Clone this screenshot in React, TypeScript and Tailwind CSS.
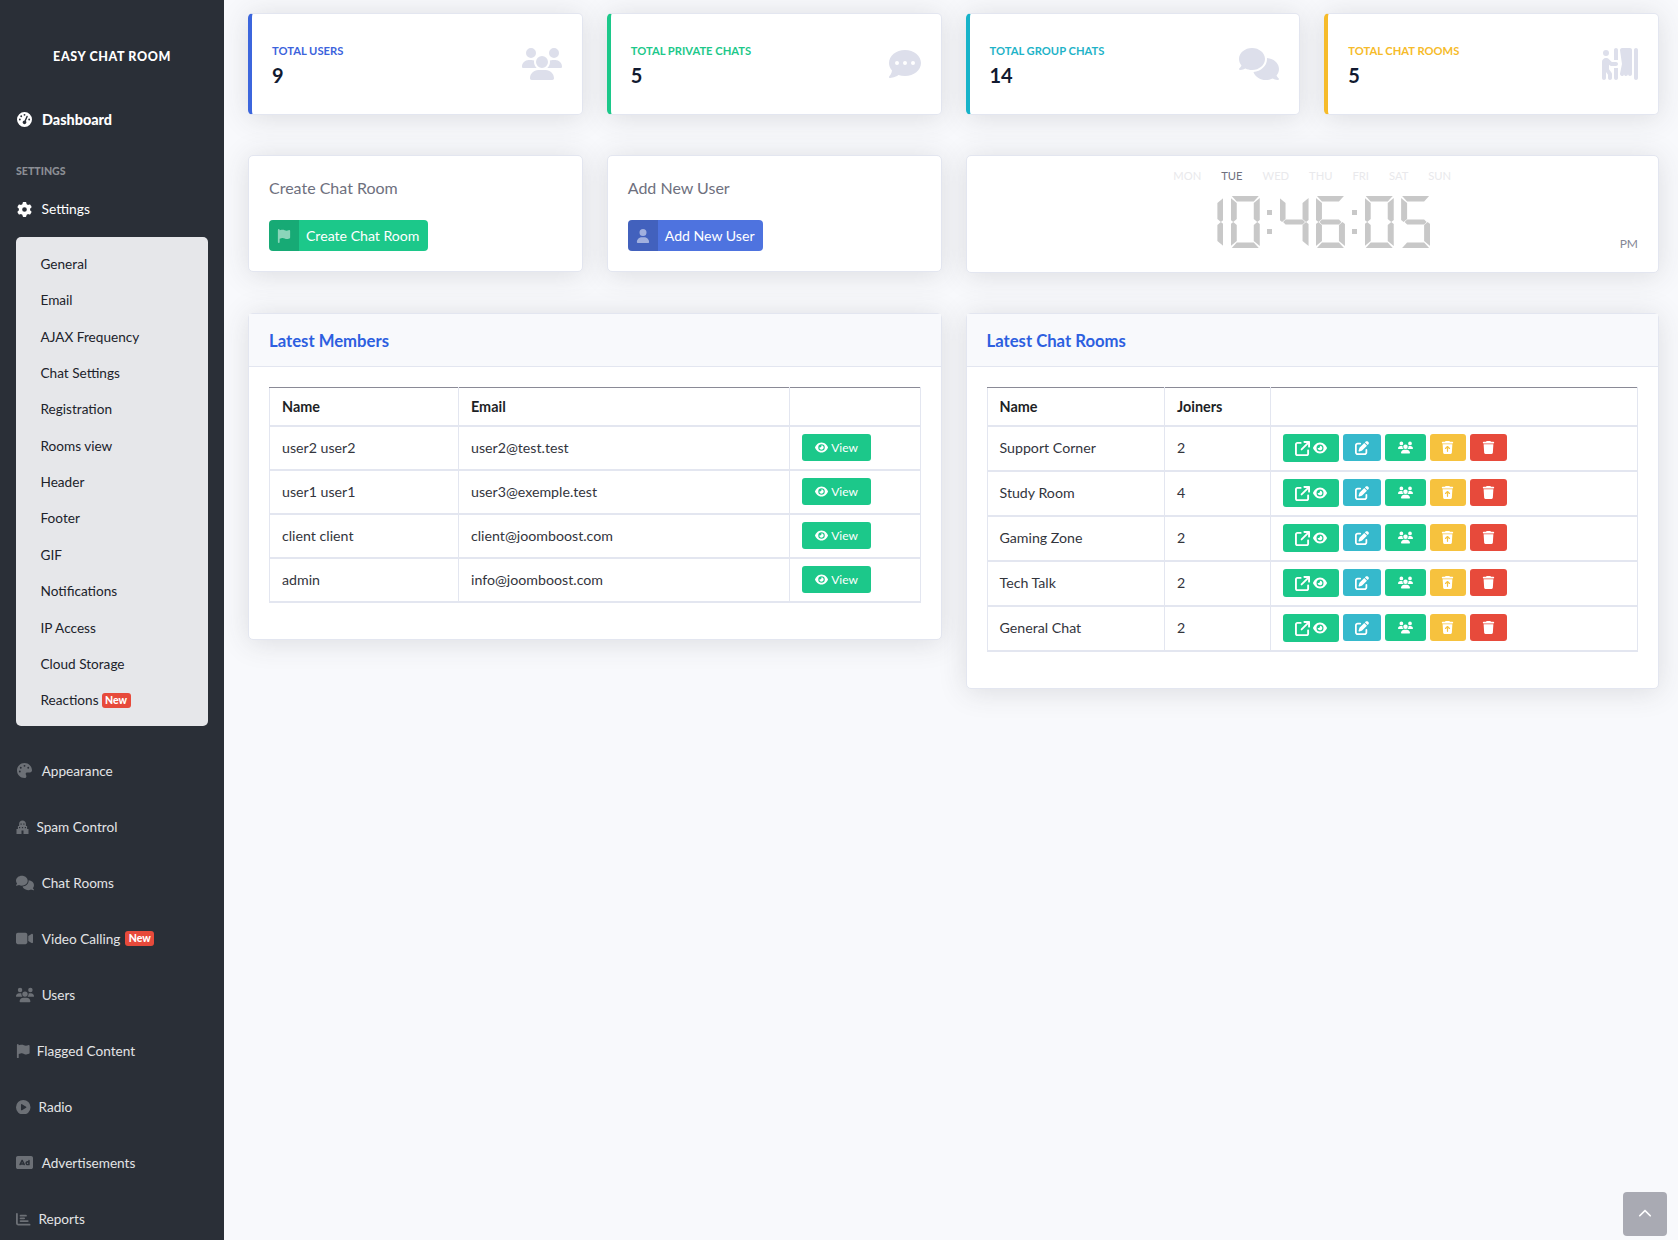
import React from "react";
import {
  FaGaugeHigh, FaGear, FaPalette, FaComments, FaVideo, FaUsers, FaFlag, FaCirclePlay, FaRectangleAd,
  FaChartBar, FaCommentDots, FaPersonBooth, FaUser, FaEye, FaArrowUpRightFromSquare, FaPenToSquare, FaTrash, FaTrashArrowUp, FaChevronUp,
} from "react-icons/fa6";

const SEG: Record<string, string> = {
  a: "[clip-path:polygon(1px_0,28px_0,23px_5.5px,6px_5.5px)]",
  b: "[clip-path:polygon(29px_2px,29px_24px,26.5px_26px,23px_23px,23px_7px)]",
  c: "[clip-path:polygon(29px_28px,29px_50px,23px_45px,23px_29px,26.5px_26px)]",
  d: "[clip-path:polygon(6px_46.5px,23px_46.5px,28px_52px,1px_52px)]",
  e: "[clip-path:polygon(0_28px,2.5px_26px,6px_29px,6px_45px,0_50px)]",
  f: "[clip-path:polygon(0_2px,6px_7px,6px_23px,2.5px_26px,0_24px)]",
  g: "[clip-path:polygon(6px_23.5px,23px_23.5px,25.5px_26px,23px_28.5px,6px_28.5px,3.5px_26px)]",
};
const DIGITS: Record<string, string> = { "0": "abcdef", "1": "bc", "4": "bcfg", "5": "acdfg", "6": "acdefg" };

function Digit({ v }: { v: string }) {
  return (
    <div className="grid h-[52px] w-[29px]">
      {DIGITS[v].split("").map((s) => (
        <div key={s} className={"col-start-1 row-start-1 h-[52px] w-[29px] bg-[#c8c8c8] " + SEG[s]} />
      ))}
    </div>
  );
}
function Colon() {
  return (
    <div className="flex h-[52px] w-[5px] flex-col items-center gap-[14px] pt-[14px]">
      <div className="h-[5px] w-[5px] bg-[#c8c8c8]" />
      <div className="h-[5px] w-[5px] bg-[#c8c8c8]" />
    </div>
  );
}

function SpamIcon() {
  return (
    <svg viewBox="1 0 12 14" className="h-[14px] w-[13px]" fill="currentColor" aria-hidden="true">
      <path d="M7 0.5c2 0 3.4 1.4 3.4 3.2V6h1.2v3H13v5H1V9h1.4V6h1.2V3.7C3.600 1.900 5 .5 7 .5z" />
      <g fill="#2a2f37">
        <rect x="5" y="3.500" width="1.200" height="1.200" /><rect x="7.800" y="3.500" width="1.200" height="1.200" />
        <rect x="3.500" y="7" width="1.200" height="1.200" /><rect x="6.400" y="7" width="1.200" height="1.200" /><rect x="9.300" y="7" width="1.200" height="1.200" />
        <rect x="6" y="10.500" width="2" height="3.500" />
      </g>
    </svg>
  );
}

const cardShadow = "shadow-[0_2.4px_28px_0_rgba(58,59,69,0.15)]";
function New({ wide }: { wide?: boolean }) {
  return <span className={(wide ? "ml-[5px] " : "ml-[3px] ") + "inline-flex h-[15px] w-[29px] items-center justify-center rounded-[3px] bg-[#e74a3b] text-[10.5px] font-black text-white"}>New</span>;
}

const sub = ["General", "Email", "AJAX Frequency", "Chat Settings", "Registration", "Rooms view", "Header", "Footer", "GIF", "Notifications", "IP Access", "Cloud Storage"];
const nav: { icon: React.ReactNode; label: string; w: string; badge?: boolean }[] = [
  { icon: <FaPalette className="ml-px text-[15px]" />, label: "Appearance", w: "w-[25.7px]" },
  { icon: <SpamIcon />, label: "Spam Control", w: "w-[20.5px]" },
  { icon: <FaComments className="text-[18px]" />, label: "Chat Rooms", w: "w-[25.7px]" },
  { icon: <FaVideo className="text-[17px]" />, label: "Video Calling", w: "w-[25.7px]", badge: true },
  { icon: <FaUsers className="text-[18px]" />, label: "Users", w: "w-[25.7px]" },
  { icon: <FaFlag className="text-[14.5px]" />, label: "Flagged Content", w: "w-[20.7px]" },
  { icon: <FaCirclePlay className="text-[14.5px]" />, label: "Radio", w: "w-[22.5px]" },
  { icon: <FaRectangleAd className="text-[17px]" />, label: "Advertisements", w: "w-[25.7px]" },
  { icon: <FaChartBar className="text-[14.5px]" />, label: "Reports", w: "w-[22.5px]" },
];
const stats = [
  { label: "Total Users", v: "9", border: "border-l-[#3c66dd]", text: "text-[#3c63dc]", icon: <FaUsers className="text-[40px]" /> },
  { label: "Total Private Chats", v: "5", border: "border-l-[#1cc88a]", text: "text-[#1cc88a]", icon: <FaCommentDots className="text-[32px]" /> },
  { label: "Total Group Chats", v: "14", border: "border-l-[#17b3c9]", text: "text-[#1fb3c8]", icon: <FaComments className="text-[40px]" /> },
  { label: "Total Chat Rooms", v: "5", border: "border-l-[#f6bb2a]", text: "text-[#f6bb2a]", icon: <FaPersonBooth className="text-[36px]" /> },
];
const members = [
  ["user2 user2", "user2@test.test"],
  ["user1 user1", "user3@exemple.test"],
  ["client client", "client@joomboost.com"],
  ["admin", "info@joomboost.com"],
];
const rooms = [["Support Corner", "2"], ["Study Room", "4"], ["Gaming Zone", "2"], ["Tech Talk", "2"], ["General Chat", "2"]];
const th = "h-[38px] border-x border-t-[1.5px] border-x-[#e3e6f0] border-t-[#8a8a96] px-3 pt-[1px] text-left align-middle text-[14.4px] font-bold text-[#1d1f26]";
const td = "border-x border-t-2 border-x-[#e3e6f0] border-t-[#e3e6f0] px-3 align-middle text-[14.2px] text-[#33353d]";
const ab = "flex h-[27px] items-center justify-center rounded-[3px] text-white";

function Panel({ title, children }: { title: string; children: React.ReactNode }) {
  return (
    <section className={"rounded-[5px] border border-[#e3e6f0] bg-white " + cardShadow}>
      <header className="flex h-[53px] items-center border-b border-[#e3e6f0] bg-[#f8f9fc] px-5 pt-[3px] text-[16.7px] font-bold text-[#2d5fe0]">{title}</header>
      <div className="p-5 pb-[36px]">{children}</div>
    </section>
  );
}

export default function App() {
  return (
    <div className="flex h-[1240px] overflow-hidden bg-[#f8f9fc] font-['Lato',sans-serif]">
      <aside className="flex w-[224px] shrink-0 flex-col bg-[#2a2f37] px-4 text-[13.6px] text-[#e3e4e6]">
        <div className="mt-1 h-px bg-[#3b4048]" />
        <div className="mt-[44px] flex h-[20px] items-center justify-center text-[12.5px] font-black tracking-[0.6px] text-white">EASY CHAT ROOM</div>
        <div className="mt-[43px] flex h-[20px] items-center text-[14.4px] font-black text-white">
          <span className="flex w-[26px] items-center"><FaGaugeHigh className="ml-px text-[15px]" /></span>Dashboard
        </div>
        <div className="mt-[17px] h-px bg-[#3b4048]" />
        <div className="mt-[18px] flex h-[14px] items-center text-[10.6px] font-black uppercase text-[#8b8e94]">Settings</div>
        <div className="mt-[21px] flex h-[20px] items-center text-[13.8px] text-white">
          <span className="flex w-[25.5px] items-center"><FaGear className="ml-px text-[15px]" /></span>Settings
        </div>
        <ul className="mt-[17px] rounded-[5px] bg-[#e6e7ea] pb-[7px] pl-[24.5px] pt-[9px] text-[#20232b]">
          {sub.map((s) => <li key={s} className="flex h-[36.4px] items-center">{s}</li>)}
          <li className="flex h-[36.4px] items-center">Reactions<New /></li>
        </ul>
        <nav className="mt-[17px]">
          {nav.map((n) => (
            <a key={n.label} className="flex h-[56px] items-center">
              <span className={"flex shrink-0 items-center text-[#6c7076] " + n.w}>{n.icon}</span>
              {n.label}{n.badge && <New wide />}
            </a>
          ))}
        </nav>
      </aside>

      <main className="flex min-w-0 flex-1 flex-col pl-6 pr-[19px] pt-[13px]">
        <div className="grid grid-cols-4 gap-6">
          {stats.map((s) => (
            <div key={s.label} className={"flex h-[101.5px] items-center justify-between rounded-[5px] border border-l-4 border-[#e3e6f0] bg-white pl-5 pr-5 " + s.border + " " + cardShadow}>
              <div className="pt-[2px]">
                <div className={"text-[11.2px] font-bold uppercase leading-[16px] " + s.text}>{s.label}</div>
                <div className="mt-[4px] text-[20px] font-bold leading-[24px] text-[#111a30]">{s.v}</div>
              </div>
              <div className="text-[#dddfeb]">{s.icon}</div>
            </div>
          ))}
        </div>

        <div className="mt-[40.5px] grid grid-cols-4 items-start gap-6">
          {[
            { t: "Create Chat Room", bg: "bg-[#1cc88a]", pr: "pr-[9px]", icon: <FaFlag className="text-[14px]" /> },
            { t: "Add New User", bg: "bg-[#4e73df]", pr: "pr-[8px]", icon: <FaUser className="text-[14px]" /> },
          ].map((c) => (
            <div key={c.t} className={"h-[117px] rounded-[5px] border border-[#e3e6f0] bg-white px-5 pt-[20px] " + cardShadow}>
              <div className="text-[16px] leading-[24px] text-[#6e707e]">{c.t}</div>
              <button className={"mt-[20px] flex h-[31px] items-stretch overflow-hidden rounded-[4px] text-[14.1px] text-white " + c.bg}>
                <span className="flex w-[30px] items-center justify-center bg-black/15 text-white/50">{c.icon}</span>
                <span className={"flex items-center pl-[7px] " + c.pr}>{c.t}</span>
              </button>
            </div>
          ))}
          <div className={"col-span-2 h-[118px] rounded-[5px] border border-[#e3e6f0] bg-white px-5 pt-[11px] " + cardShadow}>
            <div className="flex justify-center gap-5 text-[11.2px] leading-[18px] text-[#e9e9ec]">
              <span>MON</span><span className="text-[#6e707e]">TUE</span><span>WED</span><span>THU</span><span>FRI</span><span>SAT</span><span>SUN</span>
            </div>
            <div className="mt-[11px] grid grid-cols-[1fr_auto_1fr]">
              <div />
              <div className="flex gap-[7.4px]" role="img" aria-label="10:46:05">
                <Digit v="1" /><Digit v="0" /><Colon /><Digit v="4" /><Digit v="6" /><Colon /><Digit v="0" /><Digit v="5" />
              </div>
              <div className="-mb-[2px] self-end justify-self-end text-[12px] leading-[12px] text-[#858796]">PM</div>
            </div>
          </div>
        </div>

        <div className="mt-[40px] grid grid-cols-2 items-start gap-6">
          <Panel title="Latest Members">
            <table className="w-full table-fixed border-collapse border-b-2 border-[#e3e6f0]">
              <colgroup><col className="w-[189px]" /><col className="w-[331px]" /><col /></colgroup>
              <thead><tr><th className={th}>Name</th><th className={th}>Email</th><th className={th} /></tr></thead>
              <tbody>
                {members.map(([n, e]) => (
                  <tr key={e} className="h-[44px]">
                    <td className={td}>{n}</td><td className={td}>{e}</td>
                    <td className={td}>
                      <button className={"w-[69px] gap-[3px] bg-[#1cc88a] text-[12px] " + ab}><FaEye className="text-[13px]" />View</button>
                    </td>
                  </tr>
                ))}
              </tbody>
            </table>
          </Panel>
          <Panel title="Latest Chat Rooms">
            <table className="w-full table-fixed border-collapse border-b-2 border-[#e3e6f0]">
              <colgroup><col className="w-[177.6px]" /><col className="w-[105.8px]" /><col /></colgroup>
              <thead><tr><th className={th}>Name</th><th className={th}>Joiners</th><th className={th} /></tr></thead>
              <tbody>
                {rooms.map(([n, j]) => (
                  <tr key={n} className="h-[45px]">
                    <td className={td}>{n}</td><td className={td}>{j}</td>
                    <td className={td}>
                      <div className="flex items-start gap-1">
                        <button className={"h-[28px] w-[56px] gap-[3px] bg-[#1cc88a] " + ab}><FaArrowUpRightFromSquare className="text-[15px]" /><FaEye className="text-[14px]" /></button>
                        <button className={"w-[38px] bg-[#36b9cc] " + ab}><FaPenToSquare className="text-[14px]" /></button>
                        <button className={"w-[41px] bg-[#1cc88a] " + ab}><FaUsers className="text-[15px]" /></button>
                        <button className={"w-[36px] bg-[#f6c23e] " + ab}><FaTrashArrowUp className="text-[13px]" /></button>
                        <button className={"w-[37px] bg-[#e74a3b] " + ab}><FaTrash className="text-[13px]" /></button>
                      </div>
                    </td>
                  </tr>
                ))}
              </tbody>
            </table>
          </Panel>
        </div>
      </main>

      <a className="fixed bottom-[4px] right-[11px] flex h-[44px] w-[44px] items-center justify-center rounded-[4px] bg-[#a9aab3] text-white">
        <FaChevronUp className="text-[14px]" />
      </a>
    </div>
  );
}
